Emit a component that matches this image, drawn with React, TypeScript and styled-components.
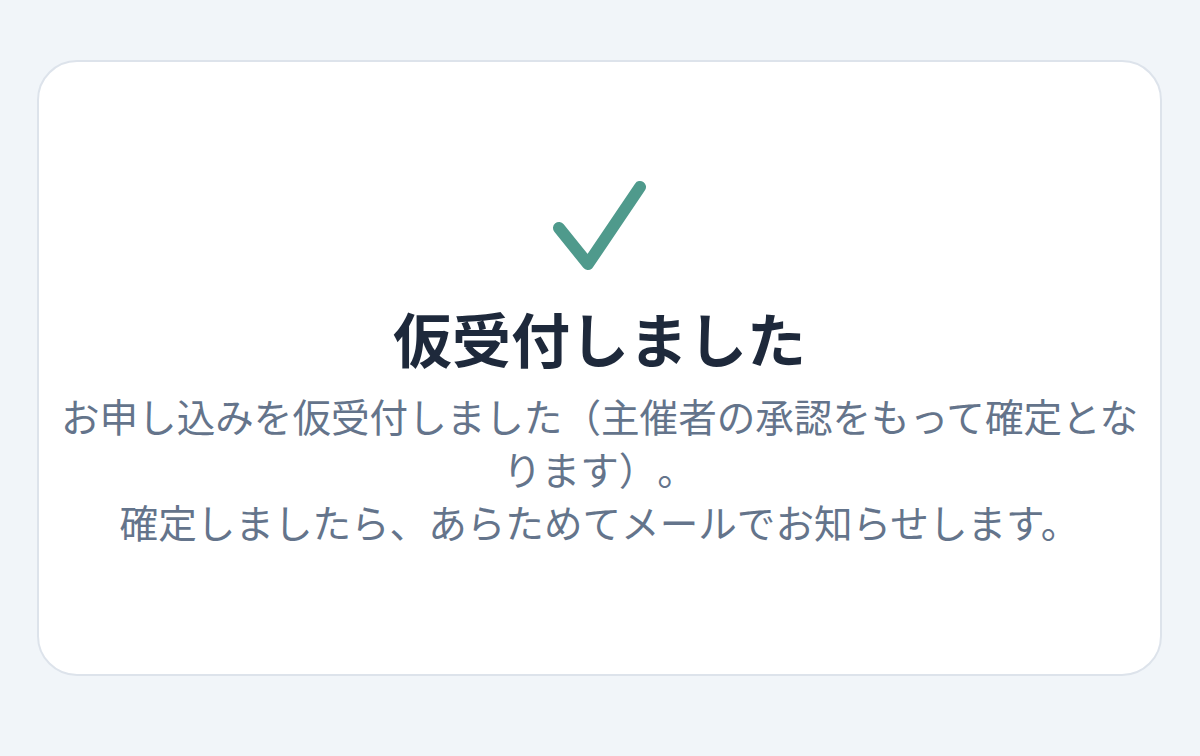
import styled, { createGlobalStyle } from 'styled-components';

const GlobalStyle = createGlobalStyle`
  html,
  body {
    margin: 0;
    padding: 0;
    background-color: #f1f5f9;
    font-family: 'Noto Sans CJK JP', 'Noto Sans', sans-serif;
  }
`;

const Page = styled.main`
  box-sizing: border-box;
  width: 1200px;
  min-height: 756px;
  padding: 60px 38px 80px 37px;
`;

const Card = styled.section`
  box-sizing: border-box;
  height: 616px;
  padding: 0 16px 10px;
  display: flex;
  flex-direction: column;
  align-items: center;
  justify-content: center;
  background-color: #ffffff;
  border: 2px solid #dde3eb;
  border-radius: 40px;
  text-align: center;
`;

const CheckIcon = styled.svg`
  display: block;
  width: 100px;
  height: 100px;
  margin-bottom: 24px;
`;

const Title = styled.h1`
  margin: 0 0 15px;
  font-size: 59px;
  line-height: 72px;
  font-weight: 700;
  color: #1e293b;
`;

const Message = styled.p`
  margin: 0;
  font-size: 38.6px;
  line-height: 53px;
  font-weight: 400;
  color: #64748b;
  text-spacing-trim: space-all;
`;

export default function App() {
  return (
    <>
      <GlobalStyle />
      <Page>
        <Card>
          <CheckIcon viewBox="0 0 100 100" aria-hidden="true">
            <polyline
              points="9,50 38,86 90,9"
              fill="none"
              stroke="#4f9a8c"
              strokeWidth={12}
              strokeLinecap="round"
              strokeLinejoin="round"
            />
          </CheckIcon>
          <Title>仮受付しました</Title>
          <Message>
            お申し込みを仮受付しました（主催者の承認をもって確定となります）。
            <br />
            確定しましたら、あらためてメールでお知らせします。
          </Message>
        </Card>
      </Page>
    </>
  );
}
